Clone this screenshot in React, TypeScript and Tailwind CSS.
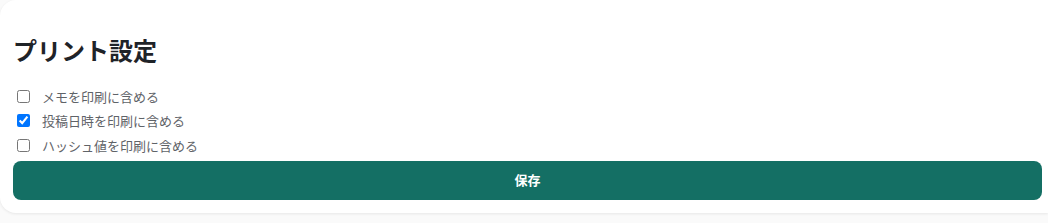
import React, { useState } from "react";

const options = [
  { id: "memo", label: "メモを印刷に含める", checked: false },
  { id: "date", label: "投稿日時を印刷に含める", checked: true },
  { id: "hash", label: "ハッシュ値を印刷に含める", checked: false },
];

const font = "font-['Noto_Sans_CJK_JP','Noto_Sans',sans-serif]";

export default function App() {
  const [values, setValues] = useState(options.map((o) => o.checked));

  return (
    <div className={`min-h-[223px] w-full bg-[#fafafa] ${font}`}>
      <div className="rounded-l-2xl bg-white pb-[13px] pl-[13px] pr-[6px] pt-[34px] shadow-[0_1px_3px_rgba(0,0,0,0.08)]">
        <h2 className="text-[24px] font-bold leading-8 text-[#1f2328]">プリント設定</h2>
        <div className="mt-[18px] flex flex-col">
          {options.map((o, i) => (
            <label key={o.id} className="flex h-[24.5px] items-center gap-3 pl-1">
              <input
                type="checkbox"
                className="m-0 h-[13px] w-[13px]"
                checked={values[i]}
                onChange={() => setValues(values.map((v, j) => (j === i ? !v : v)))}
              />
              <span className="text-[13px] text-[#5f6368]">{o.label}</span>
            </label>
          ))}
        </div>
        <button className="mt-[3px] flex h-[39px] w-full items-center justify-center rounded-lg bg-[#146f64] text-[13px] font-bold text-white">
          保存
        </button>
      </div>
    </div>
  );
}
